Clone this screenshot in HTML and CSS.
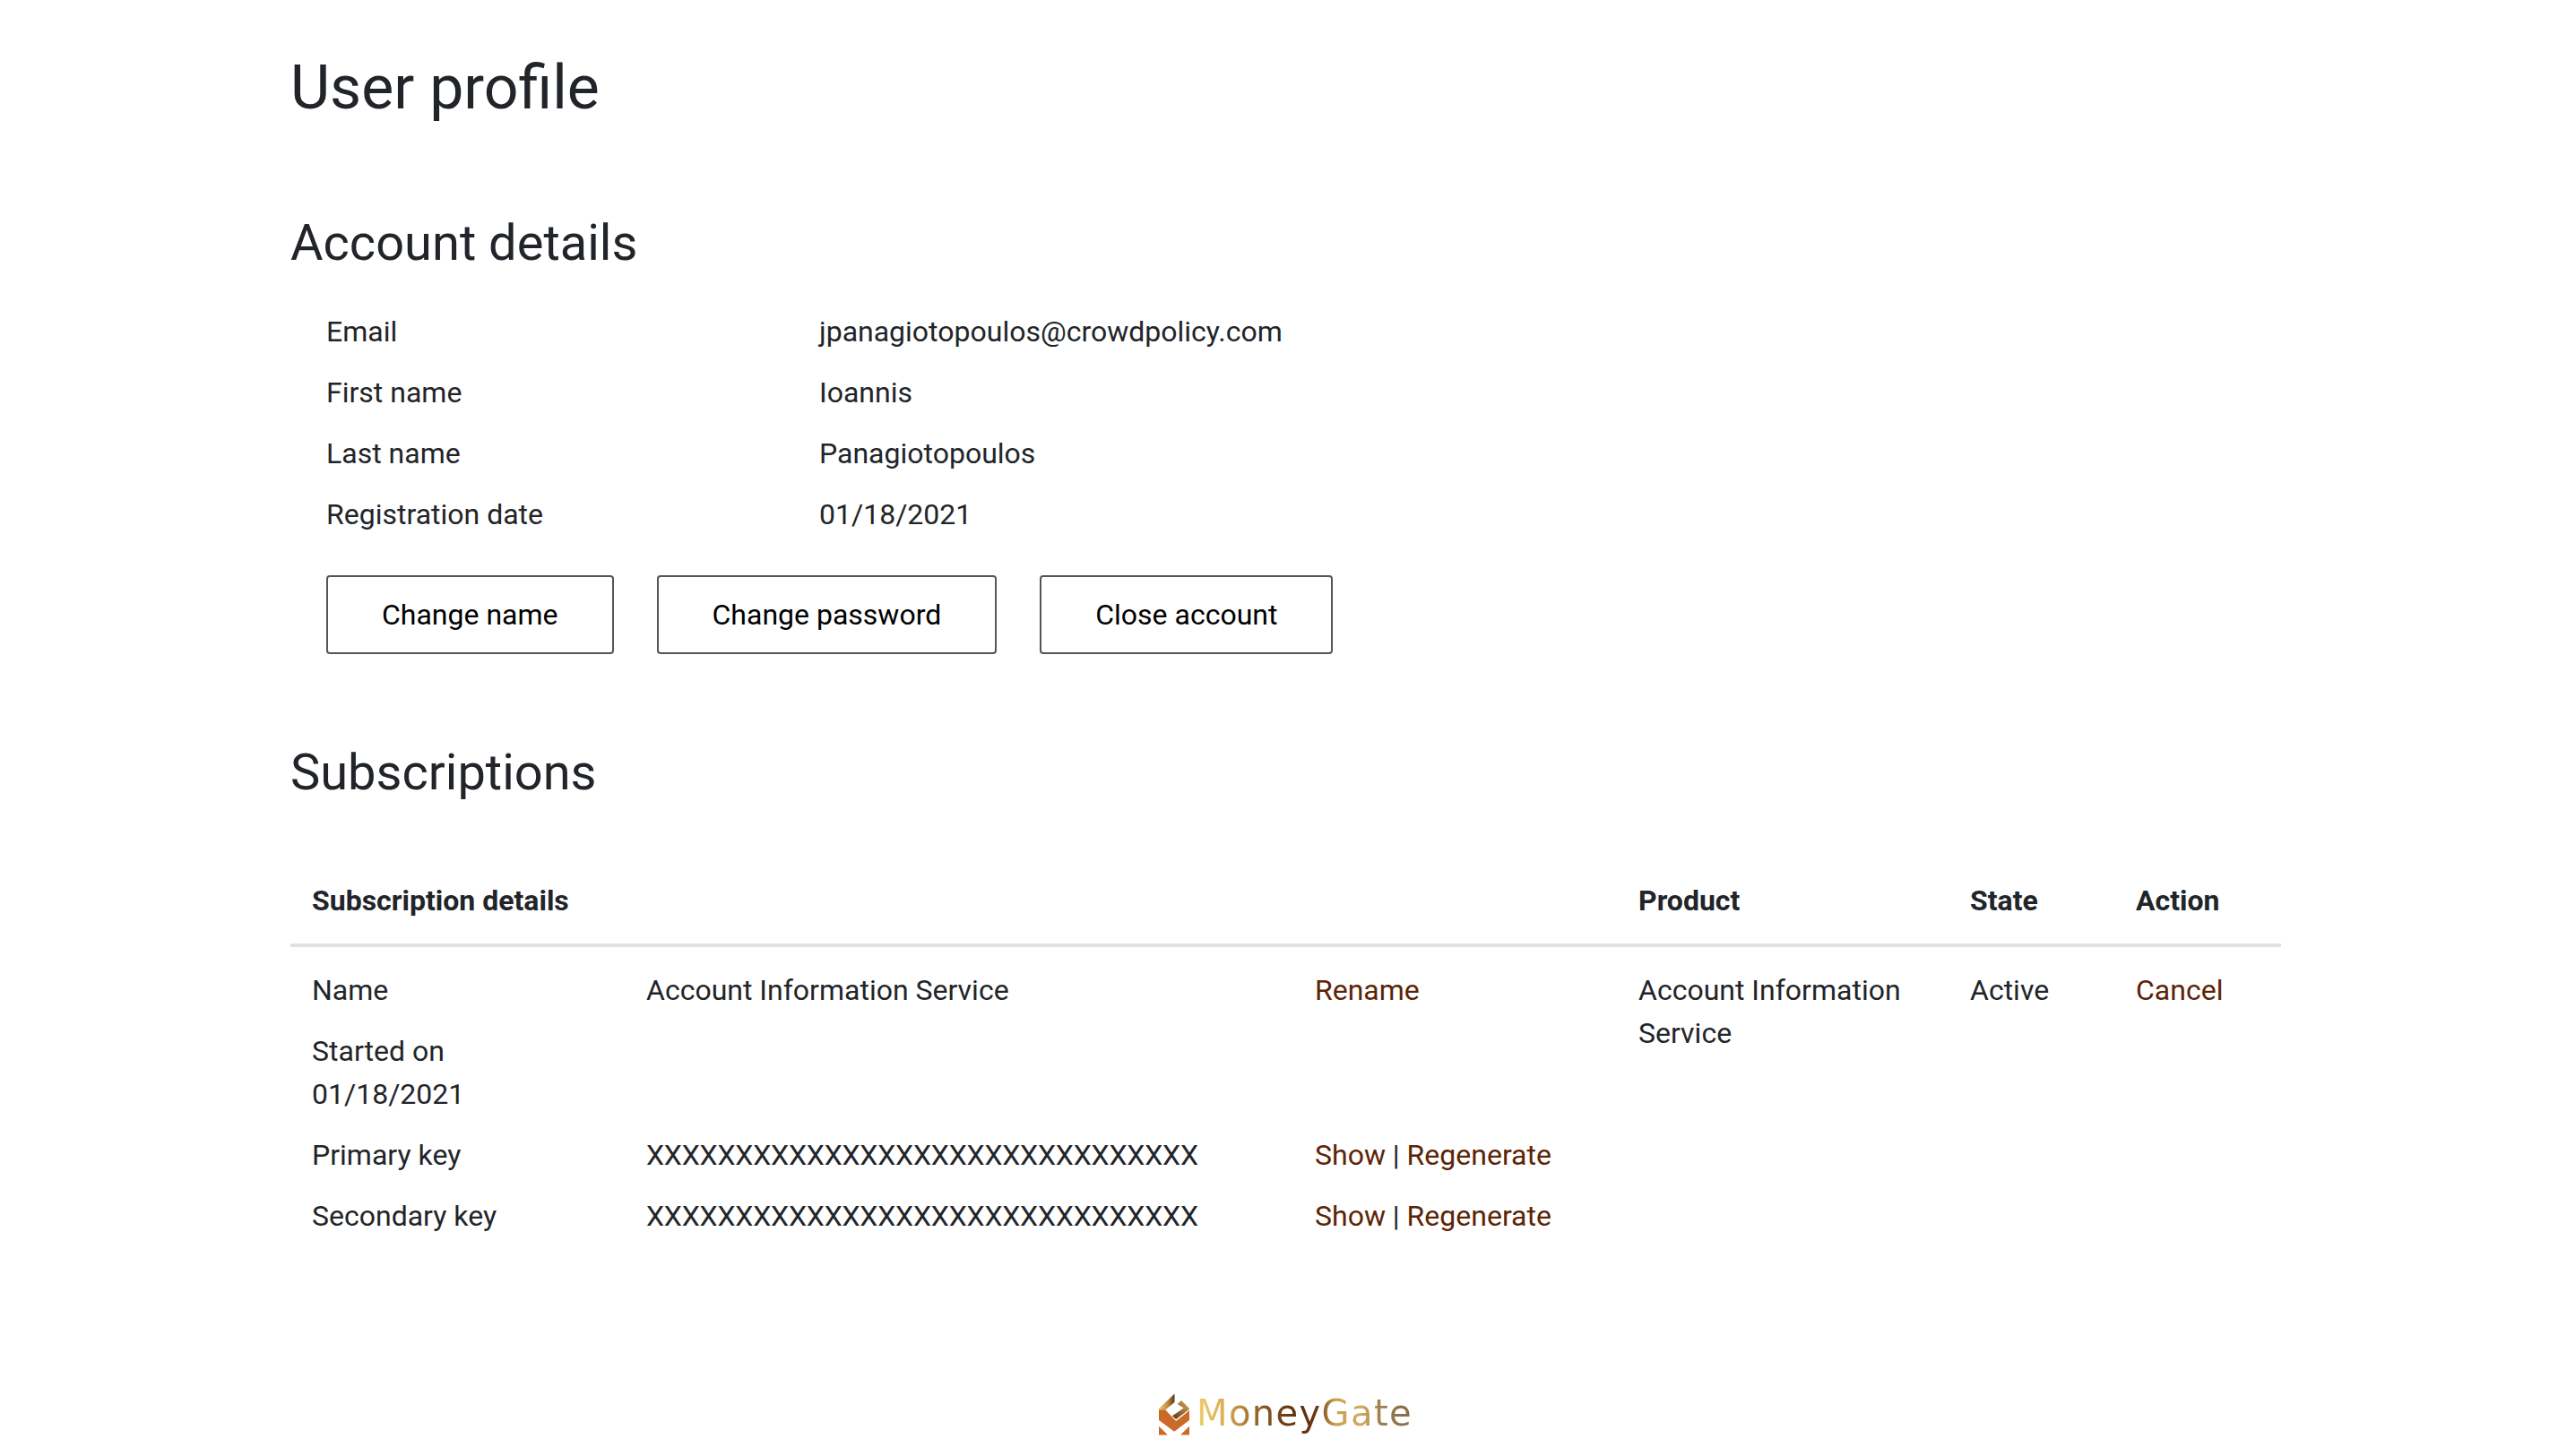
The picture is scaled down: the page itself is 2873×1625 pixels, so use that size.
FILE: index.html
```html
<!DOCTYPE html>
<html lang="en">
<head>
<meta charset="utf-8">
<title>User profile</title>
<link rel="stylesheet" href="styles.css">
</head>
<body>
<main class="page">
  <h1 class="title">User profile</h1>
  <h2 class="section-title account-title">Account details</h2>
  <dl class="details">
    <dt>Email</dt><dd>jpanagiotopoulos@crowdpolicy.com</dd>
    <dt>First name</dt><dd>Ioannis</dd>
    <dt>Last name</dt><dd>Panagiotopoulos</dd>
    <dt>Registration date</dt><dd>01/18/2021</dd>
  </dl>
  <div class="actions">
    <button class="btn" type="button">Change name</button>
    <button class="btn" type="button">Change password</button>
    <button class="btn" type="button">Close account</button>
  </div>
  <h2 class="section-title subs-title">Subscriptions</h2>
  <table class="subs">
    <colgroup>
      <col class="c-details"><col class="c-product"><col class="c-state"><col class="c-action">
    </colgroup>
    <thead>
      <tr><th>Subscription details</th><th>Product</th><th>State</th><th>Action</th></tr>
    </thead>
    <tbody>
      <tr>
        <td class="details-cell">
          <div class="sub-grid">
            <div class="sub-label">Name</div><div>Account Information Service</div><div><a href="#">Rename</a></div>
            <div class="sub-label">Started on 01/18/2021</div><div></div><div></div>
            <div class="sub-label">Primary key</div><div class="key">XXXXXXXXXXXXXXXXXXXXXXXXXXXXXXX</div><div><a href="#">Show</a> | <a href="#">Regenerate</a></div>
            <div class="sub-label">Secondary key</div><div class="key">XXXXXXXXXXXXXXXXXXXXXXXXXXXXXXX</div><div><a href="#">Show</a> | <a href="#">Regenerate</a></div>
          </div>
        </td>
        <td class="cell">Account Information Service</td>
        <td class="cell">Active</td>
        <td class="cell"><a href="#">Cancel</a></td>
      </tr>
    </tbody>
  </table>
  <footer class="footer">
    <div class="logo">
      <svg class="logo-mark" viewBox="102 75 103 140" width="34" height="47" aria-hidden="true">
        <defs>
          <linearGradient id="gold-left" x1="0" y1="0" x2="1" y2="0">
            <stop offset="0" stop-color="#ecca78"/><stop offset="0.6" stop-color="#b98a3c"/><stop offset="1" stop-color="#5e3410"/>
          </linearGradient>
          <linearGradient id="gold-right" x1="0" y1="1" x2="1" y2="0">
            <stop offset="0" stop-color="#5e3410"/><stop offset="0.6" stop-color="#a87a38"/><stop offset="1" stop-color="#d9b36a"/>
          </linearGradient>
        </defs>
        <path d="M102 125 L155 75 V104 L126 128 L124 131 H102Z" fill="url(#gold-left)"/>
        <path d="M178 98 L205 125 V128 L160 162 L147 150 L186 124 L165 110Z" fill="url(#gold-right)"/>
        <path d="M102 130 H124 L160 168 L205 132 V165 L154 203 L102 165Z" fill="#cb6a27"/>
        <path d="M102 185 L132 215 H102Z M205 185 L175 215 H205Z" fill="#cb6a27"/>
      </svg>
      <span class="logo-text">MoneyGate</span>
    </div>
  </footer>
</main>
</body>
</html>
```

FILE: styles.css
```css
html, body {
  margin: 0;
  padding: 0;
  background: #fff;
}
body {
  font-family: Roboto, "Liberation Sans", sans-serif;
  font-size: 32px;
  line-height: 48px;
  color: #212529;
}
.page {
  width: 2221px;
  margin-left: 324px;
  height: 1625px;
  overflow: hidden;
}
.title {
  margin: 0;
  padding-top: 55px;
  font-size: 68px;
  font-weight: 400;
  line-height: 86px;
}
.section-title {
  margin: 0;
  font-size: 56px;
  font-weight: 400;
  line-height: 70px;
}
.account-title {
  margin-top: 95px;
}
.details {
  display: grid;
  grid-template-columns: 550px 1fr;
  row-gap: 20px;
  margin: 40px 0 0;
  padding-left: 40px;
}
.details dt, .details dd {
  margin: 0;
}
.actions {
  display: flex;
  gap: 48px;
  margin-top: 44px;
  padding-left: 40px;
}
.btn {
  height: 88px;
  padding: 0 60px;
  background: #fff;
  border: 2px solid #555;
  border-radius: 4px;
  color: #000;
  font: inherit;
}
.subs-title {
  margin-top: 97px;
}
.subs {
  width: 100%;
  margin-top: 84px;
  border-collapse: collapse;
  table-layout: fixed;
}
.c-details { width: 1480px; }
.c-product { width: 370px; }
.c-state { width: 185px; }
.c-action { width: 186px; }
.subs th {
  padding: 0 24px 24px;
  border-bottom: 4px solid #dee2e6;
  font-weight: 700;
  text-align: left;
}
.cell {
  padding: 24px 24px;
  vertical-align: top;
}
.details-cell {
  padding: 24px 0 0;
  vertical-align: top;
}
.sub-grid {
  display: grid;
  grid-template-columns: 373px 746px 1fr;
  padding-left: 24px;
  row-gap: 20px;
}
.sub-label {
  width: 230px;
}
.key {
  letter-spacing: -0.2px;
}
a {
  color: #5b2406;
  text-decoration: none;
}
.footer {
  display: flex;
  justify-content: center;
  margin-top: 171px;
}
.logo {
  display: flex;
  align-items: flex-end;
  gap: 8px;
}
.logo-text {
  font-family: "DejaVu Sans", Inter, sans-serif;
  font-weight: 400;
  font-size: 40px;
  line-height: 50px;
  letter-spacing: 1.4px;
  background: linear-gradient(90deg, #f0cf72 0%, #d9a94f 14%, #8b5a22 30%, #5d2f0e 47%, #6b3a15 56%, #c9a050 64%, #d4a95b 76%, #9a7a4e 86%, #8a6a48 100%);
  -webkit-background-clip: text;
  background-clip: text;
  color: transparent;
}
```
